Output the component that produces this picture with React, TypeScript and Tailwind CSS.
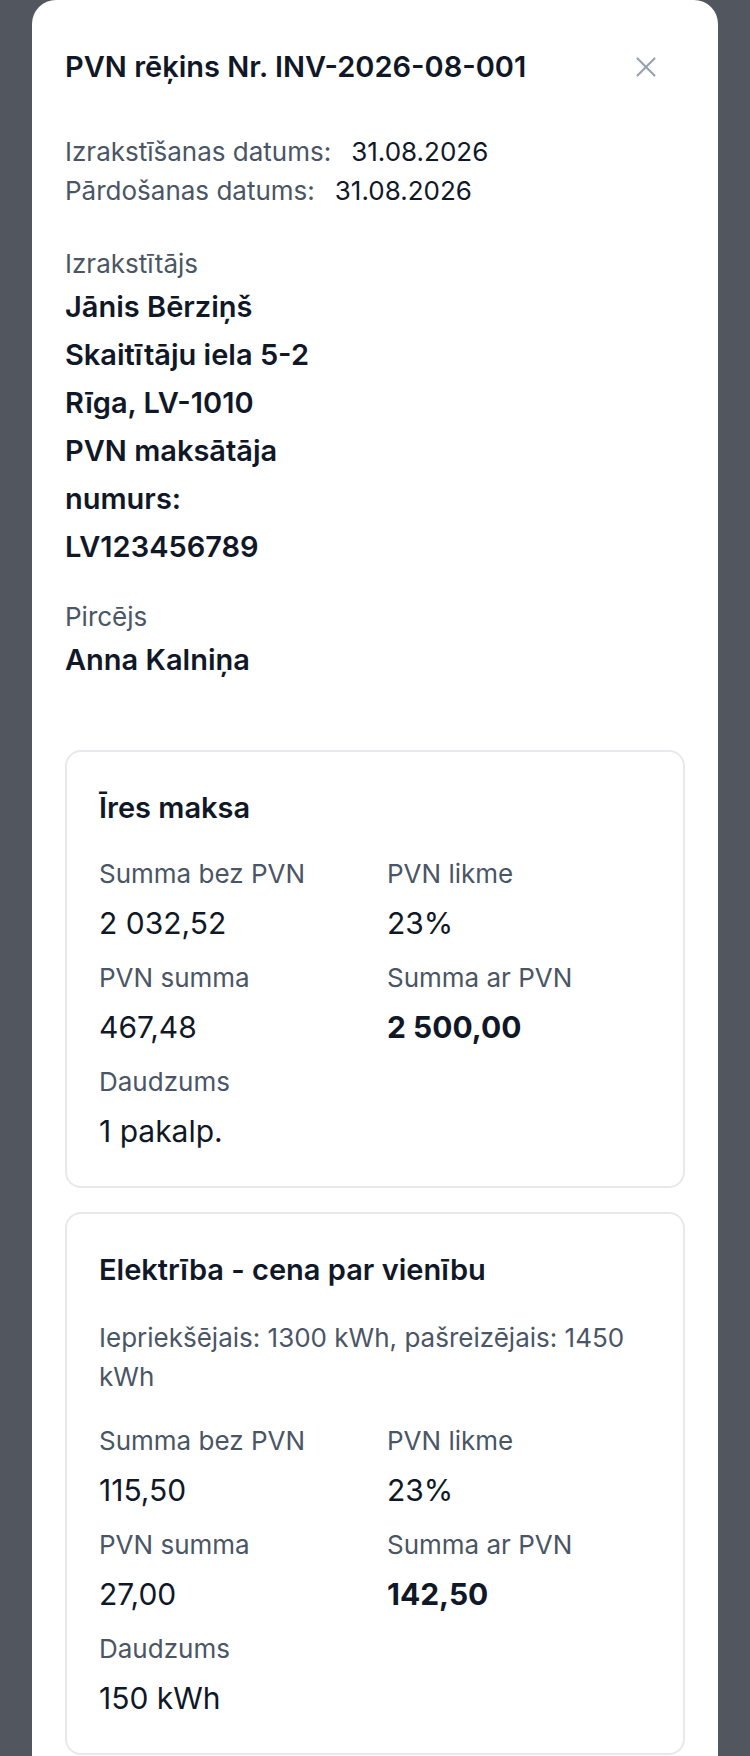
import React from "react";
import { X } from "lucide-react";

interface LineItem {
  title: string;
  note?: string;
  net: string;
  rate: string;
  vat: string;
  gross: string;
  qty: string;
}

const items: LineItem[] = [
  {
    title: "Īres maksa",
    net: "2 032,52",
    rate: "23%",
    vat: "467,48",
    gross: "2 500,00",
    qty: "1 pakalp.",
  },
  {
    title: "Elektrība - cena par vienību",
    note: "Iepriekšējais: 1300 kWh, pašreizējais: 1450 kWh",
    net: "115,50",
    rate: "23%",
    vat: "27,00",
    gross: "142,50",
    qty: "150 kWh",
  },
];

const Field = ({
  label,
  value,
  strong,
}: {
  label: string;
  value: string;
  strong?: boolean;
}) => (
  <div>
    <div className="text-[26px] leading-[36px] text-gray-600">{label}</div>
    <div
      className={
        strong
          ? "mt-[11px] text-[30px] leading-[40px] font-bold text-gray-900"
          : "mt-[11px] text-[30px] leading-[40px] text-gray-900"
      }
    >
      {value}
    </div>
  </div>
);

const ItemCard = ({ item }: { item: LineItem }) => (
  <div className="rounded-2xl border-2 border-[#e8e9ed] px-8 pt-[38px] pb-[35px]">
    <h3 className="text-[29px] leading-[36px] font-semibold text-gray-900">
      {item.title}
    </h3>
    {item.note && (
      <p className="mt-[30px] text-[26px] leading-[39px] text-gray-600">
        {item.note}
      </p>
    )}
    <div
      className={
        item.note
          ? "mt-[27px] grid grid-cols-2 gap-x-6 gap-y-[17px]"
          : "mt-[30px] grid grid-cols-2 gap-x-6 gap-y-[17px]"
      }
    >
      <Field label="Summa bez PVN" value={item.net} />
      <Field label="PVN likme" value={item.rate} />
      <Field label="PVN summa" value={item.vat} />
      <Field label="Summa ar PVN" value={item.gross} strong />
      <Field label="Daudzums" value={item.qty} />
    </div>
  </div>
);

export default function App() {
  return (
    <div className="min-h-screen bg-[#52565f] font-['Inter',sans-serif]">
      <div className="mx-8 rounded-t-3xl bg-white px-[33px] pt-[42px] pb-10">
        <div className="flex items-center justify-between">
          <h2 className="text-[29px] leading-[36px] font-semibold text-gray-900">
            PVN rēķins Nr. INV-2026-08-001
          </h2>
          <button className="mr-[14px] flex h-[50px] w-[50px] items-center justify-center text-gray-400">
            <X size={34} strokeWidth={1.5} />
          </button>
        </div>

        <div className="mt-[40px] text-[26px] leading-[39px]">
          <p>
            <span className="text-gray-600">Izrakstīšanas datums:</span>
            <span className="ml-[20px] text-gray-900">31.08.2026</span>
          </p>
          <p>
            <span className="text-gray-600">Pārdošanas datums:</span>
            <span className="ml-[20px] text-gray-900">31.08.2026</span>
          </p>
        </div>

        <div className="mt-[35px] w-[310px]">
          <div className="text-[26px] leading-[38px] text-gray-600">
            Izrakstītājs
          </div>
          <div className="text-[29px] leading-[48px] font-semibold text-gray-900">
            <p>Jānis Bērziņš</p>
            <p>Skaitītāju iela 5-2</p>
            <p>Rīga, LV-1010</p>
            <p>PVN maksātāja numurs: LV123456789</p>
          </div>
        </div>

        <div className="mt-[27px]">
          <div className="text-[26px] leading-[38px] text-gray-600">Pircējs</div>
          <p className="text-[29px] leading-[48px] font-semibold text-gray-900">
            Anna Kalniņa
          </p>
        </div>

        <div className="mt-[66px] flex flex-col gap-6">
          {items.map((item) => (
            <ItemCard key={item.title} item={item} />
          ))}
        </div>
      </div>
    </div>
  );
}
